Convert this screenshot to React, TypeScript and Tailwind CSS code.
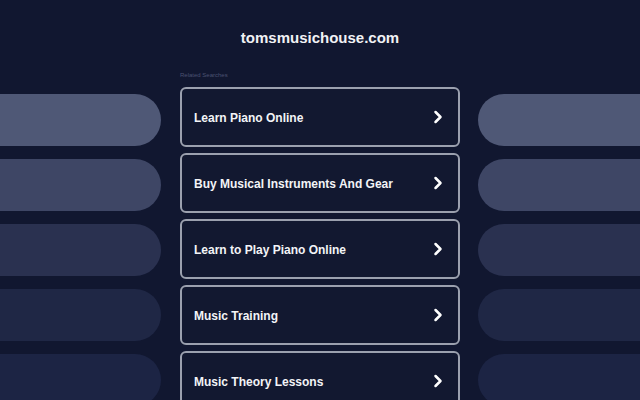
import { ChevronRight } from 'lucide-react'

const links = [
  'Learn Piano Online',
  'Buy Musical Instruments And Gear',
  'Learn to Play Piano Online',
  'Music Training',
  'Music Theory Lessons',
]

const pills = ['bg-[#4f5876]', 'bg-[#3e4665]', 'bg-[#2a3150]', 'bg-[#1f2745]', 'bg-[#1c2444]']

export default function App() {
  return (
    <div
      className="h-[400px] w-[640px] overflow-hidden bg-[#111730] text-white"
      style={{ fontFamily: "'Liberation Sans', Arial, sans-serif" }}
    >
      <h1 className="pt-[29px] text-center text-[15px] font-bold leading-[18px] text-[#f1f2f5]">
        tomsmusichouse.com
      </h1>

      <div className="mt-[20px] flex">
        {/* left pills */}
        <div className="flex w-[161px] shrink-0 flex-col gap-[13px] pt-[27px]">
          {pills.map((c) => (
            <div key={c} className={`-ml-10 h-[52px] w-[201px] rounded-r-[26px] ${c}`} />
          ))}
        </div>

        <div className="ml-[19px] w-[280px] shrink-0">
          <div className="pt-[4px] text-[6px] leading-[8px] text-[#4b5270]">Related Searches</div>
          <div className="mt-[8px] flex flex-col gap-[6px]">
            {links.map((t) => (
              <div
                key={t}
                className="flex h-[60px] items-center justify-between rounded-[6px] border-2 border-[#9ba0ae] bg-[#121830] pl-[12px] pr-[10px]"
              >
                <span className="pt-[1px] text-[12px] font-bold text-[#f3f4f7]">{t}</span>
                <ChevronRight className="h-[20px] w-[20px] text-white" strokeWidth={3} />
              </div>
            ))}
          </div>
        </div>

        {/* right pills */}
        <div className="ml-[18px] flex flex-1 flex-col gap-[13px] pt-[27px]">
          {pills.map((c) => (
            <div key={c} className={`h-[52px] w-[200px] rounded-l-[26px] ${c}`} />
          ))}
        </div>
      </div>
    </div>
  )
}
